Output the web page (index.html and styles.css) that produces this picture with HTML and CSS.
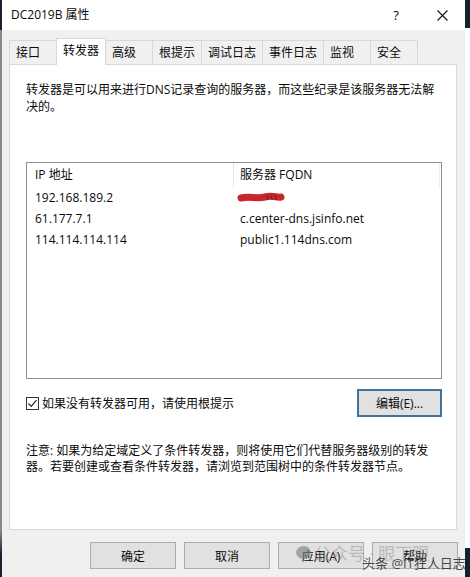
FILE: index.html
```html
<!DOCTYPE html>
<html lang="zh-CN">
<head>
<meta charset="utf-8">
<title>DC2019B 属性</title>
<link rel="stylesheet" href="styles.css">
</head>
<body>
<div class="screen">
  <div class="edge-left"></div>
  <div class="dialog">
    <div class="titlebar">
      <div class="title">DC2019B 属性</div>
      <div class="tb-btn help">?</div>
      <div class="tb-btn close">
        <svg width="11" height="11" viewBox="0 0 11 11"><path d="M0.5 0.5 L10.5 10.5 M10.5 0.5 L0.5 10.5" stroke="#111" stroke-width="1.1" fill="none"/></svg>
      </div>
    </div>
    <div class="body">
      <div class="tabs">
        <div class="tab">接口</div>
        <div class="tab active">转发器</div>
        <div class="tab">高级</div>
        <div class="tab">根提示</div>
        <div class="tab">调试日志</div>
        <div class="tab">事件日志</div>
        <div class="tab">监视</div>
        <div class="tab">安全</div>
      </div>
      <div class="panel">
        <p class="desc">转发器是可以用来进行DNS记录查询的服务器，而这些纪录是该服务器无法解决的。</p>
        <div class="listbox">
          <div class="lv-row lv-head">
            <div class="c1">IP 地址</div>
            <div class="c2">服务器 FQDN</div>
          </div>
          <div class="lv-row">
            <div class="c1">192.168.189.2</div>
            <div class="c2"><svg class="redact" width="50" height="14" viewBox="0 0 50 14"><path d="M4 7 C12 5 20 8 28 6 S40 7 44 6" stroke="#c8262d" stroke-width="7" stroke-linecap="round" fill="none"/><path d="M30 4 L31 9 M34 4 L35 9 M38 4 L39 9" stroke="#7a1a1e" stroke-width="1" fill="none"/></svg></div>
          </div>
          <div class="lv-row">
            <div class="c1">61.177.7.1</div>
            <div class="c2">c.center-dns.jsinfo.net</div>
          </div>
          <div class="lv-row">
            <div class="c1">114.114.114.114</div>
            <div class="c2">public1.114dns.com</div>
          </div>
        </div>
        <div class="check-row">
          <label class="check">
            <span class="box"><svg width="11" height="11" viewBox="0 0 11 11"><path d="M1.5 5.5 L4.2 8.3 L9.5 2.2" stroke="#222" stroke-width="1.2" fill="none"/></svg></span>
            <span>如果没有转发器可用，请使用根提示</span>
          </label>
          <div class="btn default">编辑(E)...</div>
        </div>
        <p class="note">注意: 如果为给定域定义了条件转发器，则将使用它们代替服务器级别的转发器。若要创建或查看条件转发器，请浏览到范围树中的条件转发器节点。</p>
      </div>
      <div class="buttons">
        <div class="btn">确定</div>
        <div class="btn">取消</div>
        <div class="btn">应用(A)</div>
        <div class="btn">帮助</div>
      </div>
    </div>
  </div>
  <div class="edge-right">
    <div class="er-top"></div>
    <div class="er-mid"></div>
    <div class="er-bot"></div>
  </div>
  <div class="watermark">
    <span class="wm-gzh"><span class="wm-dot"></span>公众号 · 眼下眼</span>
    <span class="wm-tt">头条 @IT狂人日志</span>
  </div>
</div>
</body>
</html>
```
FILE: styles.css
```css
* { box-sizing: border-box; }
html, body { margin: 0; padding: 0; }
body {
  width: 470px;
  height: 577px;
  overflow: hidden;
  background: #fff;
  font-family: "Open Sans", "Noto Sans CJK SC", sans-serif;
  font-size: 12px;
  color: #0a0a0a;
}
.screen {
  position: relative;
  display: flex;
  height: 577px;
}
.edge-left {
  width: 2px;
  background: linear-gradient(#17222e 0 30px, #8a8a8a 30px 530px, #17222e 555px);
}
.dialog {
  width: 463px;
  display: flex;
  flex-direction: column;
  background: #f0f0f0;
}
.titlebar {
  height: 30px;
  background: #fff;
  display: flex;
  align-items: center;
}
.title {
  flex: 1;
  padding-left: 9px;
  font-size: 12px;
  line-height: 30px;
}
.tb-btn {
  width: 46px;
  height: 30px;
  display: flex;
  align-items: center;
  justify-content: center;
}
.help { font-size: 13px; }
.body {
  flex: 1;
  padding: 8px 8px 0 7px;
}
.tabs {
  display: flex;
  align-items: flex-end;
  height: 26px;
}
.tab {
  height: 24px;
  min-width: 48px;
  padding: 0 6px;
  margin-right: -1px;
  border: 1px solid #d9d9d9;
  border-bottom: none;
  background: #f0f0f0;
  line-height: 23px;
  white-space: nowrap;
}
.tab.active {
  position: relative;
  z-index: 1;
  height: 27px;
  margin-bottom: -1px;
  background: #fff;
  line-height: 23px;
  padding-bottom: 2px;
}
.panel {
  height: 466px;
  background: #fff;
  border: 1px solid #d9d9d9;
  padding: 16px 14px 0 16px;
}
.desc {
  margin: 0;
  line-height: 17px;
}
.listbox {
  margin-top: 47px;
  height: 217px;
  border: 1px solid #8f8f8f;
}
.lv-row {
  display: flex;
  height: 21px;
  line-height: 21px;
}
.lv-row.lv-head {
  height: 24px;
  line-height: 24px;
}
.c1 {
  width: 207px;
  padding-left: 8px;
  white-space: nowrap;
}
.c2 {
  width: 206px;
  padding-left: 6px;
  white-space: nowrap;
}
.lv-head .c1 { border-right: 1px solid #e5e5e5; }
.lv-head .c2 { border-right: 1px solid #ececec; }
.redact { display: block; margin-top: 4px; margin-left: -3px; }
.check-row {
  margin-top: 10px;
  height: 28px;
  display: flex;
  align-items: center;
  justify-content: space-between;
}
.check {
  display: flex;
  align-items: center;
  gap: 3px;
}
.box {
  width: 13px;
  height: 13px;
  border: 1px solid #333;
  display: flex;
  align-items: center;
  justify-content: center;
  background: #fff;
}
.btn {
  width: 86px;
  height: 27px;
  background: #e1e1e1;
  border: 1px solid #adadad;
  display: flex;
  align-items: center;
  justify-content: center;
}
.btn.default {
  width: 85px;
  height: 28px;
  border: 2px solid #3f729c;
}
.note {
  margin: 26px 0 0;
  line-height: 16px;
}
.buttons {
  margin-top: 12px;
  margin-right: -1px;
  display: flex;
  justify-content: flex-end;
  gap: 8px;
}
.edge-right {
  width: 5px;
  display: flex;
  flex-direction: column;
}
.er-top { height: 28px; background: #14202e; }
.er-mid { flex: 1; background: #fff; }
.er-bot { height: 29px; background: #14202e; }
.watermark {
  position: absolute;
  left: 296px;
  top: 540px;
  width: 170px;
  height: 34px;
  pointer-events: none;
}
.wm-gzh {
  position: absolute;
  left: 0;
  top: 0;
  display: flex;
  align-items: center;
  gap: 3px;
  font-size: 17px;
  color: rgba(150, 150, 150, 0.55);
  white-space: nowrap;
}
.wm-dot {
  width: 15px;
  height: 13px;
  border-radius: 50%;
  background: rgba(120, 120, 120, 0.6);
}
.wm-tt {
  position: absolute;
  left: 66px;
  top: 13px;
  font-size: 13px;
  color: rgba(40, 40, 40, 0.85);
  white-space: nowrap;
}
```
